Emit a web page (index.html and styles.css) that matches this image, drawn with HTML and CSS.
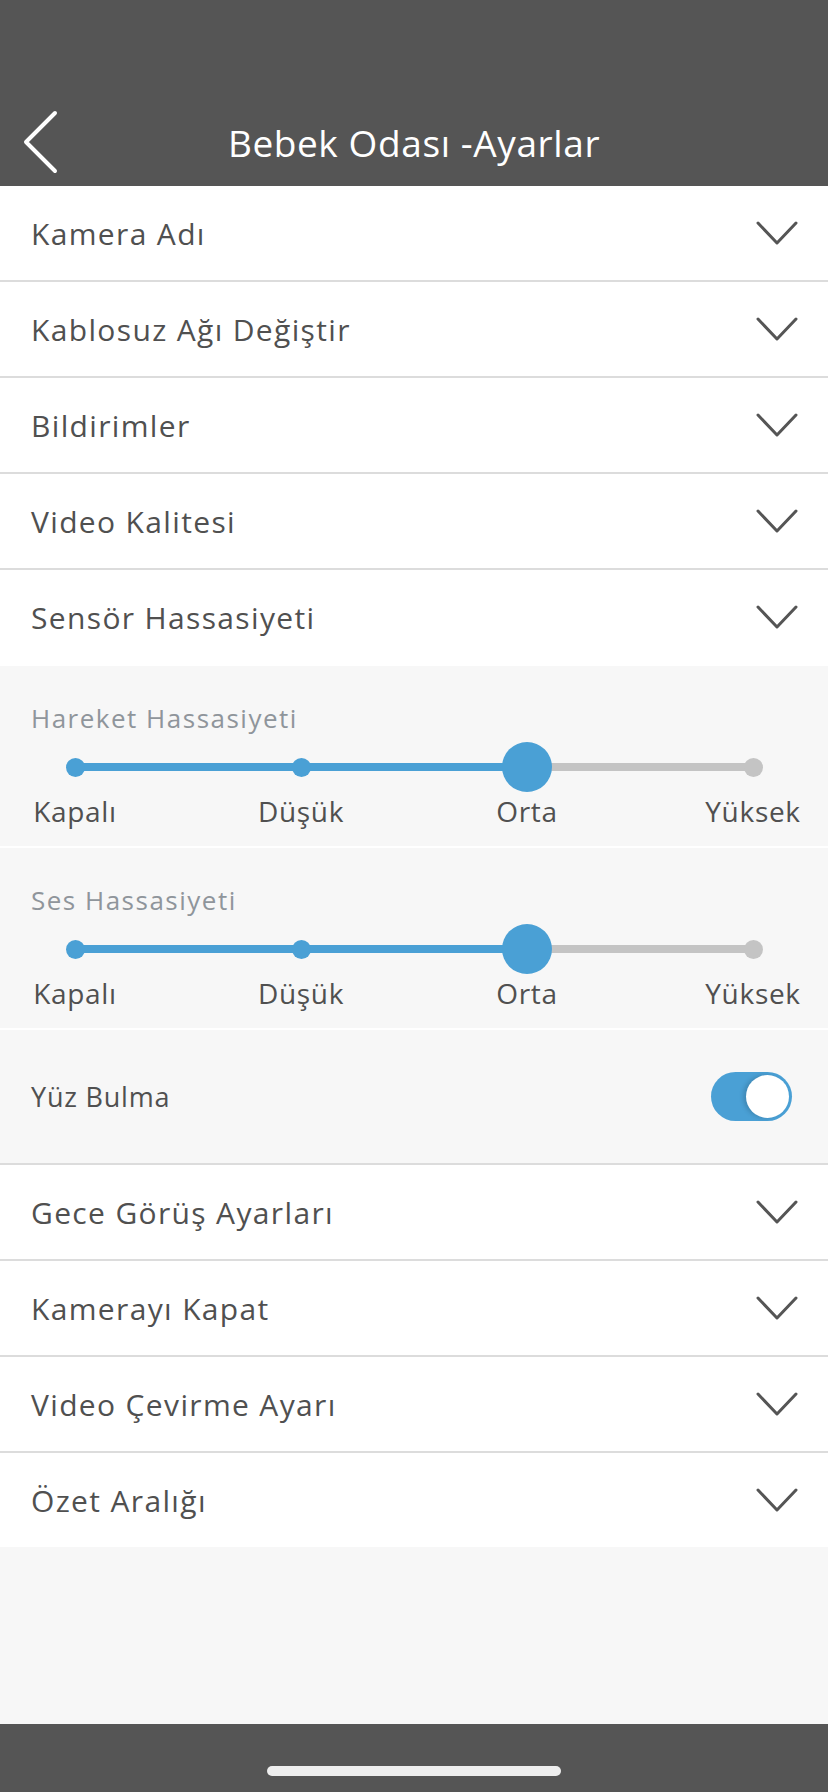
FILE: index.html
```html
<html>
<head>
    <title>Bebek Odası - Ayarlar</title>
    <link rel="stylesheet" href="styles.css">
</head>
<body>

    <div class="header">
        <div class="navbar">
            <button class="back" aria-label="Geri">
                <svg width="40" height="66" viewBox="0 0 40 66">
                    <path d="M35 4 L6 33 L35 62" fill="none" stroke="#fff" stroke-width="4" stroke-linecap="round" stroke-linejoin="round"/>
                </svg>
            </button>
            <h1>Bebek Odası -Ayarlar</h1>
        </div>
    </div>

    <div class="content">
        <div class="row">
            <span>Kamera Adı</span>
            <svg class="chevron" viewBox="0 0 42 25"><path d="M2 2 L21 22 L40 2"/></svg>
        </div>
        <div class="row">
            <span>Kablosuz Ağı Değiştir</span>
            <svg class="chevron" viewBox="0 0 42 25"><path d="M2 2 L21 22 L40 2"/></svg>
        </div>
        <div class="row">
            <span>Bildirimler</span>
            <svg class="chevron" viewBox="0 0 42 25"><path d="M2 2 L21 22 L40 2"/></svg>
        </div>
        <div class="row">
            <span>Video Kalitesi</span>
            <svg class="chevron" viewBox="0 0 42 25"><path d="M2 2 L21 22 L40 2"/></svg>
        </div>
        <div class="row open">
            <span>Sensör Hassasiyeti</span>
            <svg class="chevron" viewBox="0 0 42 25"><path d="M2 2 L21 22 L40 2"/></svg>
        </div>

        <div class="panel slider">
            <div class="slider-title">Hareket Hassasiyeti</div>
            <div class="track">
                <div class="stop"><span class="dot on"></span></div>
                <div class="stop"><span class="dot on"></span></div>
                <div class="stop"><span class="knob"></span></div>
                <div class="stop"><span class="dot"></span></div>
            </div>
            <div class="labels">
                <div class="stop"><span>Kapalı</span></div>
                <div class="stop"><span>Düşük</span></div>
                <div class="stop"><span>Orta</span></div>
                <div class="stop"><span>Yüksek</span></div>
            </div>
        </div>

        <div class="panel slider">
            <div class="slider-title">Ses Hassasiyeti</div>
            <div class="track">
                <div class="stop"><span class="dot on"></span></div>
                <div class="stop"><span class="dot on"></span></div>
                <div class="stop"><span class="knob"></span></div>
                <div class="stop"><span class="dot"></span></div>
            </div>
            <div class="labels">
                <div class="stop"><span>Kapalı</span></div>
                <div class="stop"><span>Düşük</span></div>
                <div class="stop"><span>Orta</span></div>
                <div class="stop"><span>Yüksek</span></div>
            </div>
        </div>

        <div class="panel switch-row">
            <span>Yüz Bulma</span>
            <div class="toggle"><span class="toggle-knob"></span></div>
        </div>

        <div class="row">
            <span>Gece Görüş Ayarları</span>
            <svg class="chevron" viewBox="0 0 42 25"><path d="M2 2 L21 22 L40 2"/></svg>
        </div>
        <div class="row">
            <span>Kamerayı Kapat</span>
            <svg class="chevron" viewBox="0 0 42 25"><path d="M2 2 L21 22 L40 2"/></svg>
        </div>
        <div class="row">
            <span>Video Çevirme Ayarı</span>
            <svg class="chevron" viewBox="0 0 42 25"><path d="M2 2 L21 22 L40 2"/></svg>
        </div>
        <div class="row last">
            <span>Özet Aralığı</span>
            <svg class="chevron" viewBox="0 0 42 25"><path d="M2 2 L21 22 L40 2"/></svg>
        </div>
    </div>

    <div class="home-bar">
        <div class="indicator"></div>
    </div>

</body>
</html>
```

FILE: styles.css
```css
body {
    margin: 0;
    padding: 0;
    min-height: 1792px;
    display: flex;
    flex-direction: column;
    background-color: #f7f7f7;
    font-family: "Open Sans", "Noto Sans", sans-serif;
    color: #505050;
}
.header {
    height: 186px;
    background-color: #555;
    display: flex;
    flex-direction: column;
    justify-content: flex-end;
}
.navbar {
    height: 88px;
    display: flex;
    align-items: center;
    justify-content: center;
    position: relative;
}
.back {
    position: absolute;
    left: 20px;
    top: 11px;
    padding: 0;
    border: none;
    background: none;
    width: 40px;
    height: 66px;
}
.back svg {
    display: block;
}
h1 {
    margin: 0;
    font-size: 37px;
    font-weight: 400;
    letter-spacing: 0.6px;
    color: #fff;
}
.content {
    flex: 1;
}
.row {
    height: 94px;
    background-color: #fff;
    border-bottom: 2px solid #dcdcdc;
    display: flex;
    align-items: center;
    justify-content: space-between;
    padding: 0 30px 0 31px;
    font-size: 30px;
    letter-spacing: 1.35px;
}
.row.open {
    border-bottom-color: #fff;
}
.row.last {
    border-bottom: none;
}
.chevron {
    width: 42px;
    height: 25px;
    fill: none;
    stroke: #555;
    stroke-width: 3;
    stroke-linecap: round;
    stroke-linejoin: round;
}
.panel {
    background-color: #f7f7f7;
}
.slider {
    height: 182px;
    padding-top: 37px;
    box-sizing: border-box;
    border-bottom: 2px solid #fff;
}
.slider-title {
    margin-left: 31px;
    font-size: 26px;
    line-height: 30px;
    letter-spacing: 1.5px;
    color: #8f959b;
}
.track, .labels {
    margin: 0 75px;
    display: flex;
    justify-content: space-between;
}
.track {
    height: 50px;
    margin-top: 9px;
    background: linear-gradient(to right, #4aa0d5 66.67%, #c4c4c4 66.67%) center / 100% 8px no-repeat;
}
.stop {
    width: 0;
    display: flex;
    justify-content: center;
    align-items: center;
}
.dot {
    flex: none;
    width: 19px;
    height: 19px;
    border-radius: 50%;
    background-color: #c4c4c4;
}
.dot.on {
    background-color: #4aa0d5;
}
.knob {
    flex: none;
    width: 50px;
    height: 50px;
    border-radius: 50%;
    background-color: #4aa0d5;
}
.labels {
    margin-top: 2px;
    height: 34px;
    font-size: 28px;
    line-height: 34px;
    letter-spacing: 0.7px;
}
.labels span {
    white-space: nowrap;
}
.switch-row {
    height: 133px;
    border-bottom: 2px solid #dcdcdc;
    display: flex;
    align-items: center;
    justify-content: space-between;
    padding: 0 36px 0 31px;
    font-size: 27px;
    letter-spacing: 0.8px;
}
.toggle {
    width: 81px;
    height: 49px;
    border-radius: 25px;
    background-color: #4aa0d5;
    display: flex;
    align-items: center;
    justify-content: flex-end;
    padding: 0 3px;
    box-sizing: border-box;
}
.toggle-knob {
    width: 43px;
    height: 43px;
    border-radius: 50%;
    background-color: #fff;
    box-shadow: -3px 0 4px rgba(0, 0, 0, 0.15);
}
.home-bar {
    height: 68px;
    background-color: #555;
    display: flex;
    justify-content: center;
    padding-top: 42px;
    box-sizing: border-box;
}
.indicator {
    width: 294px;
    height: 10px;
    border-radius: 5px;
    background-color: #eee;
}
```
